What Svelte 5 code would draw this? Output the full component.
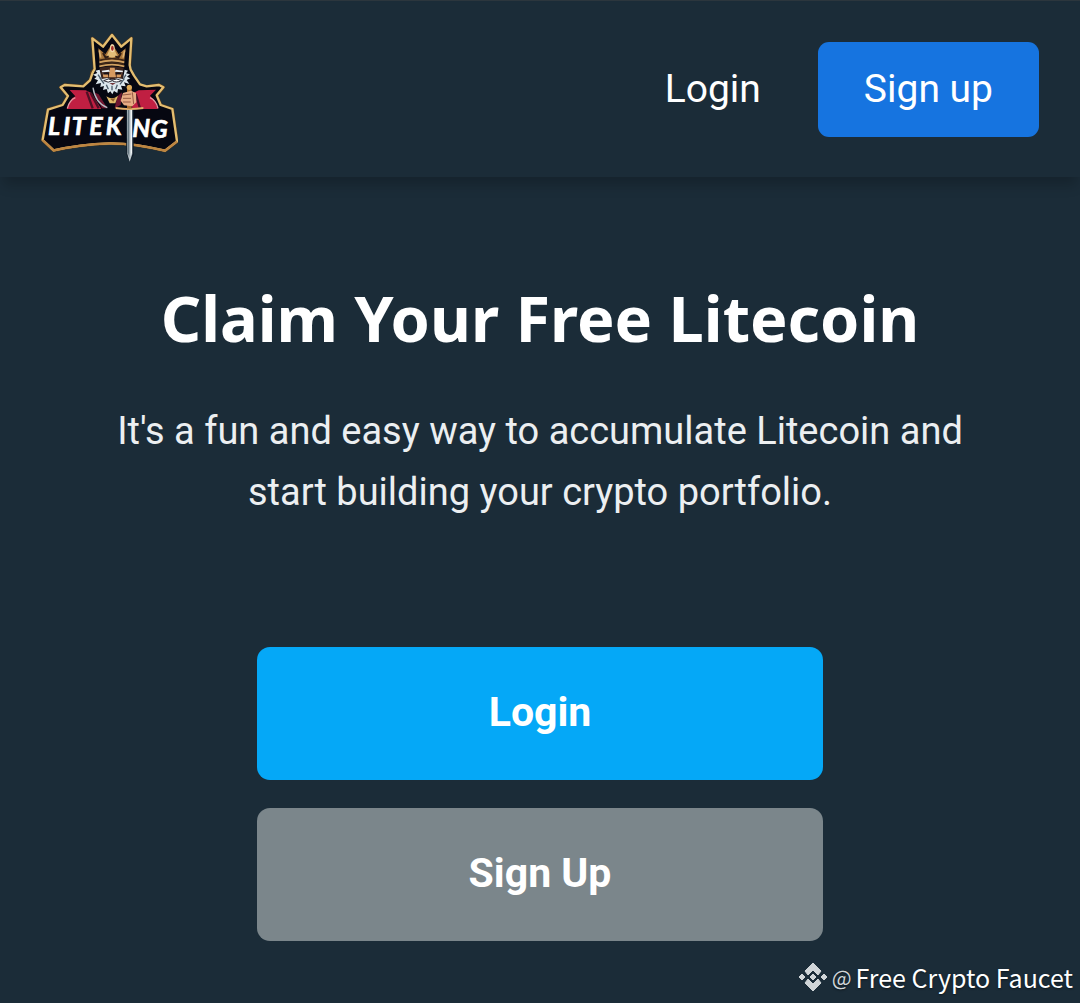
<script>
  const brand = 'Liteking';
</script>

<div class="page">
  <header>
    <a class="logo" href="#home" aria-label={brand}>
      <svg viewBox="33 -27 411 441" width="137" height="147" aria-hidden="true">
        <!-- badge outline -->
        <path d="M187 40L219 65L246 30L274 65L304 40L299 120L296 134L307 145L309 160L330 188L387 180L400 187L380 211L392 240L427 252L441 349L405 377Q310 354 238 355Q150 358 71 376L38 345L54 254L98 240L114 213L92 187L104 180L160 184L184 162L185 143L194 132Z" fill="#0a0b13" stroke="#553b1c" stroke-width="10" stroke-linejoin="round" />
        <path d="M187 40L219 65L246 30L274 65L304 40L299 120L302 134L312 152L330 178L350 184L387 180L400 187L380 211L392 240L427 252L441 349L405 377Q310 354 238 355Q150 358 71 376L38 345L54 254L98 240L114 213L92 187L104 180L160 184L180 166L188 143L194 132Z" fill="#060711" stroke="#e3bd70" stroke-width="7" stroke-linejoin="round" />
        <path d="M38 345L71 376Q150 358 238 355Q310 354 405 377L441 349" fill="none" stroke="#bd8440" stroke-width="7" stroke-linejoin="round" />
        <!-- robe -->
        <path d="M119 195L167 196L184 204L214 252H110L126 220L136 214Z" fill="#c01f42" />
        <path d="M378 194L326 196L310 204L306 252H384L372 225L360 212Z" fill="#c01f42" />
        <path d="M192 202L206 208L232 250H216ZM262 214L276 202L272 240L254 250Z" fill="#6f1730" />
        <path d="M170 200L188 250M182 204L206 250M317 207L330 250" fill="none" stroke="#4f1025" stroke-width="7" />
        <path d="M112 250Q118 226 136 218M384 250Q378 226 360 218" fill="none" stroke="#e59aa3" stroke-width="4" />
        <!-- crown -->
        <path d="M205 70L226 88L246 56L266 88L287 70L282 112Q246 102 209 112Z" fill="#a87539" />
        <path d="M246 58L262 92L246 99L230 92Z" fill="#e2bd79" />
        <path d="M208 76L212 98M284 76L279 98" stroke="#dcb273" stroke-width="5" />
        <path d="M219 84L227 98L236 94M273 84L265 98L256 94" fill="none" stroke="#2f1c14" stroke-width="6" />
        <ellipse cx="247" cy="70" rx="7" ry="12" fill="#f0d8a8" />
        <ellipse cx="247" cy="70" rx="4" ry="8" fill="#a5302c" />
        <path d="M209 106Q246 96 282 106M208 118Q246 108 282 118" fill="none" stroke="#3f2616" stroke-width="5" />
        <path d="M208 112Q246 102 283 112M208 124Q246 114 283 124" fill="none" stroke="#d3a160" stroke-width="5" />
        <!-- face, hair and beard -->
        <path d="M209 128Q246 119 281 128L277 168L247 180L217 168Z" fill="#3b231d" />
        <path d="M240 128H254L258 157H236ZM260 146L275 145L272 157H260ZM218 145L234 146V157H220Z" fill="#d79a60" />
        <path d="M215 137L237 134L240 140L217 142ZM279 137L257 134L254 140L278 142Z" fill="#e9eff3" />
        <path d="M220 146H237M257 146H274" stroke="#15101a" stroke-width="5" />
        <path d="M209 134L196 137L202 144L189 149L200 155L193 161L204 166L197 178L213 174L211 186L222 183L219 195L230 192L234 205L241 199L247 208L252 198L262 204L264 192L277 194L273 182L287 184L282 172L298 177L290 165L301 160L291 155L300 148L288 145L294 137L284 134L279 162L262 159L247 164L232 159L215 162Z" fill="#dce6ec" />
        <path d="M209 158L222 176M204 149L213 162M288 149L280 162M283 161L270 178M229 179L235 193M262 179L257 193M246 182V196" stroke="#4b5b69" stroke-width="4" />
        <path d="M221 167Q236 158 247 165Q260 158 275 167Q257 175 247 167Q235 176 221 167Z" fill="#fff" stroke="#2a2933" stroke-width="3" />
        <path d="M238 174H257L248 180Z" fill="#723539" />
        <!-- chain and medallion -->
        <path d="M189 188Q196 235 232 248" fill="none" stroke="#b8bdc5" stroke-width="4" />
        <path d="M229 214Q247 226 264 212L256 235H239Z" fill="#e0b968" />
        <path d="M240 221L256 220L250 230Z" fill="#93612c" />
        <!-- sword and hand -->
        <path d="M287 250H311V390L299 410L289 388Z" fill="#111d29" />
        <path d="M291 252H307V387L299 410L292 386Z" fill="#bdc7cd" />
        <path d="M293 252H298V397L293 382Z" fill="#667781" />
        <path d="M302 252H306V382L302 393Z" fill="#f2f5f6" />
        <path d="M257 246Q299 253 340 246V252Q298 258 257 252Z" fill="#e5b06a" />
        <path d="M291 190H305V250H291Z" fill="#a96c31" />
        <circle cx="298" cy="187" r="8" fill="#dfac5a" />
        <path d="M279 204L303 197L318 204L319 232L307 244L282 241L272 227Z" fill="#e7ac85" />
        <path d="M278 210L304 207M279 220H303M279 231H302M307 202L311 237" fill="none" stroke="#965b45" stroke-width="3" />
        <!-- wordmark -->
        <g class="wordmark">
          <text x="54" y="330">L</text>
          <text x="100" y="329">I</text>
          <text x="125" y="330">T</text>
          <text x="178" y="329">E</text>
          <text x="227" y="331">K</text>
          <text x="307" y="335">N</text>
          <text x="362" y="339">G</text>
        </g>
      </svg>
    </a>
    <nav>
      <a class="nav-login" href="#login">Login</a>
      <a class="nav-signup" href="#signup">Sign up</a>
    </nav>
  </header>

  <main>
    <h1>Claim Your Free Litecoin</h1>
    <p>It's a fun and easy way to accumulate Litecoin and start building your crypto portfolio.</p>
    <div class="actions">
      <button class="primary" type="button">Login</button>
      <button class="secondary" type="button">Sign Up</button>
    </div>
  </main>

  <footer>
    <svg viewBox="0 0 28 28" width="28" height="28" aria-hidden="true">
      <path d="M14 0L22 8L19 12L14 7L9 12L6 8ZM14 28L22 20L19 16L14 21L9 16L6 20ZM14 11L17 14L14 17L11 14ZM3 11L6 14L3 17L0 14ZM25 11L28 14L25 17L22 14Z" fill="#d0d5d8" stroke="#d0d5d8" stroke-width="1" />
    </svg>
    <span class="at">@</span>
    <span>Free Crypto Faucet</span>
  </footer>
</div>

<style>
  :global(body) {
    margin: 0;
    background: #1b2c38;
  }
  .page {
    min-height: 100vh;
    box-sizing: border-box;
    display: flex;
    flex-direction: column;
    color: #fff;
    font-family: Roboto, "Liberation Sans", sans-serif;
  }
  header {
    display: flex;
    align-items: center;
    justify-content: space-between;
    padding: 15px 41px 14px;
    border-top: 1px solid #2c363d;
    box-shadow: 0 11px 12px -3px rgba(0, 0, 0, 0.2);
  }
  .logo,
  .logo svg {
    display: block;
  }
  .wordmark {
    fill: #fff;
    stroke: #fff;
    stroke-width: 2px;
    font: italic 700 75px Lato, sans-serif;
  }
  nav {
    display: flex;
    align-items: center;
    gap: 57px;
    font-size: 39px;
    line-height: 47px;
  }
  nav a {
    color: #fff;
    text-decoration: none;
  }
  .nav-signup {
    padding: 24px 46px;
    border-radius: 11px;
    background: #1674e0;
  }
  main {
    flex: 1;
    display: flex;
    flex-direction: column;
    align-items: center;
    padding: 96px 80px 0;
    text-align: center;
  }
  h1 {
    margin: 0;
    font: 700 63px/90px "Noto Sans", "Open Sans", sans-serif;
  }
  p {
    max-width: 880px;
    margin: 38px 0 0;
    color: #eceff1;
    font-size: 38px;
    line-height: 61px;
  }
  .actions {
    display: grid;
    gap: 28px;
    width: 100%;
    max-width: 566px;
    margin-top: 124px;
  }
  button {
    height: 133px;
    padding: 0 0 4px;
    border: 0;
    border-radius: 13px;
    color: #fff;
    font: 700 41px Roboto, "Liberation Sans", sans-serif;
  }
  .primary {
    background: #05a8f7;
  }
  .secondary {
    background: #7b868b;
  }
  footer {
    display: flex;
    align-items: center;
    justify-content: flex-end;
    gap: 4px;
    padding: 0 7px 10px;
    font: 400 25px/32px "Noto Sans CJK SC", sans-serif;
    text-shadow: 0 1px 2px rgba(0, 0, 0, 0.5);
  }
  .at {
    margin-left: 1px;
    color: #d0d5d8;
    font-size: 21px;
  }
</style>
